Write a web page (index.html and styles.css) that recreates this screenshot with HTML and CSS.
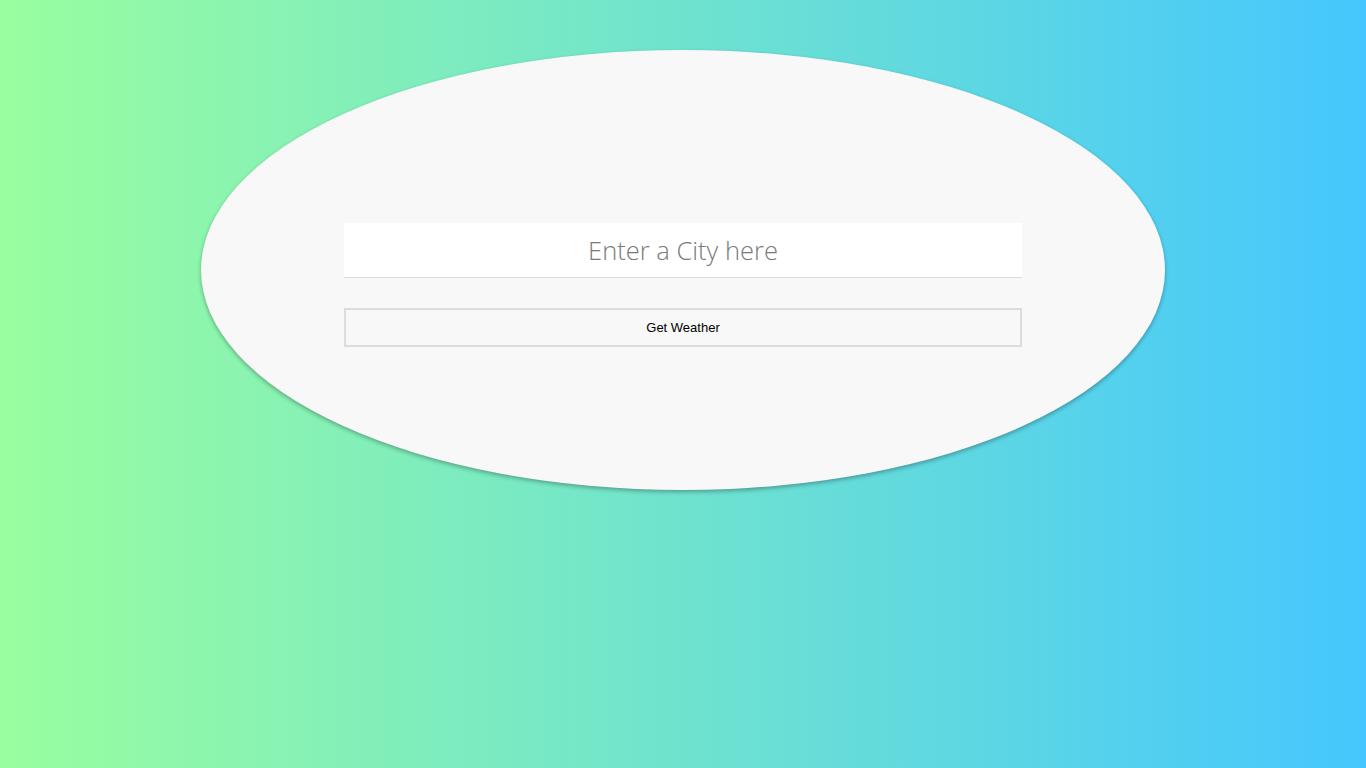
FILE: index.html
```html
<!DOCTYPE html>
<html>
<head>
<meta charset="utf-8">
<link rel="stylesheet" href="styles.css">
</head>
<body>
<main class="page">
  <section class="oval">
    <form class="search">
      <input class="city" type="text" placeholder="Enter a City here">
      <button class="go" type="button">Get Weather</button>
    </form>
  </section>
</main>
</body>
</html>
```
FILE: styles.css
```css
html, body {
  margin: 0;
  height: 100%;
}
body {
  background: linear-gradient(to right, #99fe9f, #45c7fe);
  font-family: "Liberation Sans", Arial, sans-serif;
}
.page {
  display: flex;
  justify-content: center;
  padding-top: 50px;
}
.oval {
  width: 964px;
  height: 440px;
  border-radius: 50%;
  background: #f8f8f8;
  box-shadow: 0 2px 4px rgba(0, 0, 0, 0.3);
  display: flex;
  justify-content: center;
  align-items: flex-start;
  padding-top: 173px;
  box-sizing: border-box;
}
.search {
  width: 678px;
  display: flex;
  flex-direction: column;
  gap: 30px;
}
.city {
  height: 55px;
  box-sizing: border-box;
  border: none;
  border-bottom: 1px solid #dcdcdc;
  background: #fff;
  text-align: center;
  font-family: "Open Sans", sans-serif;
  font-weight: 300;
  font-size: 25.5px;
  color: #777;
  outline: none;
  padding: 0;
}
.city::placeholder {
  color: #7a7a7a;
}
.go {
  height: 39px;
  box-sizing: border-box;
  border: 2px solid #dcdcdc;
  background: #f8f8f8;
  font-family: "Liberation Sans", Arial, sans-serif;
  font-size: 13px;
  color: #000;
  padding: 0;
}
```
